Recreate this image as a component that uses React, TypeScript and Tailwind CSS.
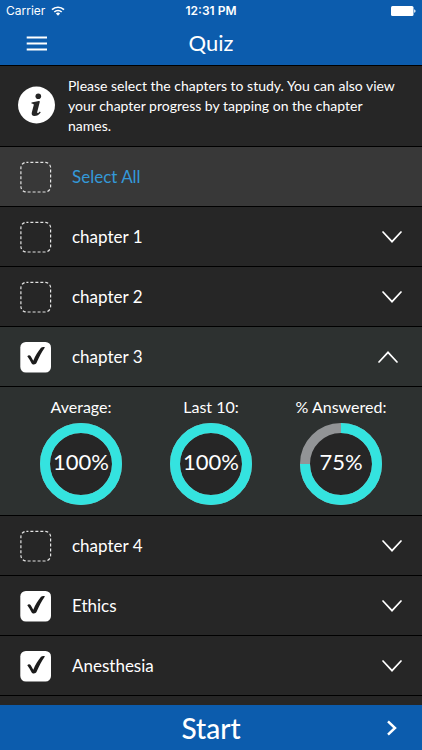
import { useState } from 'react';

interface Chapter {
  id: string;
  name: string;
  stats: Stat[];
}

interface Stat {
  label: string;
  value: number;
}

const chapters: Chapter[] = [
  { id: 'c1', name: 'chapter 1', stats: [] },
  { id: 'c2', name: 'chapter 2', stats: [] },
  {
    id: 'c3',
    name: 'chapter 3',
    stats: [
      { label: 'Average:', value: 100 },
      { label: 'Last 10:', value: 100 },
      { label: '% Answered:', value: 75 },
    ],
  },
  { id: 'c4', name: 'chapter 4', stats: [] },
  { id: 'ethics', name: 'Ethics', stats: [] },
  { id: 'anesthesia', name: 'Anesthesia', stats: [] },
];

function StatusBar() {
  return (
    <div className="grid h-[22px] grid-cols-3 items-center px-1.5 font-['Inter',sans-serif] text-xs">
      <div className="flex items-center gap-1.5">
        <span>Carrier</span>
        <svg width="14" height="10" viewBox="0 0 14 10" fill="none" stroke="currentColor" strokeWidth="1.7">
          <path d="M1 3.7a8.6 8.6 0 0 1 12 0" />
          <path d="M3.3 6a5.3 5.3 0 0 1 7.4 0" />
          <path d="M7 9.8 4.9 7.6a3 3 0 0 1 4.2 0z" fill="currentColor" stroke="none" />
        </svg>
      </div>
      <span className="text-center font-semibold">12:31 PM</span>
      <svg className="justify-self-end" width="25" height="10" viewBox="0 0 25 10" fill="currentColor">
        <rect width="22.5" height="10" rx="1.5" />
        <path d="M23.2 3.2c1.8.4 1.8 3.2 0 3.6z" />
      </svg>
    </div>
  );
}

interface TickBoxProps {
  id: string;
  checked: boolean;
  onChange: () => void;
}

function TickBox({ id, checked, onChange }: TickBoxProps) {
  return (
    <span className="relative size-8 shrink-0">
      <input
        id={id}
        type="checkbox"
        checked={checked}
        onChange={onChange}
        className="block size-8 cursor-pointer appearance-none"
      />
      <svg className="pointer-events-none absolute inset-0" width="32" height="32" viewBox="0 0 32 32">
        {checked ? (
          <>
            <rect x="0.3" y="0.9" width="30.7" height="30.7" rx="5.5" fill="#fff" />
            <path
              d="M7.300 15.200c1.100-1.300 2.700-1.200 3.600.3l2.400 4.200C15.300 14.800 17.900 10.500 21 6.800c1.200-1 3.100-1.100 3.900-.4-3.300 4.500-5.900 9.700-8.300 15.400-.9 1.900-4.100 2.300-5.200.1-1.200-2.300-2.500-4.500-4.100-6.700z"
              fill="#1c1c1c"
            />
          </>
        ) : (
          <rect
            x="0.9"
            y="1.3"
            width="29.7"
            height="29.7"
            rx="5.5"
            fill="none"
            stroke="#e4e4e4"
            strokeWidth="1.2"
            strokeDasharray="3 1.980"
            strokeDashoffset="1"
          />
        )}
      </svg>
    </span>
  );
}

function Ring({ label, value }: Stat) {
  return (
    <div className="flex flex-col items-center">
      <span className="text-base leading-5">{label}</span>
      <div className="relative mt-1.5 grid size-[82px] place-items-center pb-1">
        <svg className="absolute inset-0" width="82" height="82" viewBox="0 0 82 82">
          <circle cx="41" cy="41" r="36" fill="#262626" stroke="#929496" strokeWidth="10" />
          <circle
            cx="41"
            cy="41"
            r="36"
            fill="none"
            stroke="#34e3df"
            strokeWidth="10"
            pathLength="100"
            strokeDasharray={`${value} ${100 - value}`}
            transform="rotate(-90 41 41)"
          />
        </svg>
        <span className="relative text-[22px] leading-6">{value}%</span>
      </div>
    </div>
  );
}

export default function App() {
  const [selected, setSelected] = useState<string[]>(['c3', 'ethics', 'anesthesia']);
  const [openId, setOpenId] = useState<string | null>('c3');

  const allSelected = selected.length === chapters.length;

  const toggle = (id: string) => {
    setSelected((prev) => (prev.includes(id) ? prev.filter((s) => s !== id) : [...prev, id]));
  };

  const toggleAll = () => {
    setSelected(allSelected ? [] : chapters.map((c) => c.id));
  };

  return (
    <div className="flex h-screen flex-col bg-[#262626] font-['Lato',sans-serif] text-white">
      {/* Header */}
      <header className="shrink-0 border-b border-black bg-[#0c5cad]">
        <StatusBar />
        <div className="grid h-[43px] grid-cols-[1fr_auto_1fr] items-center px-6">
          <button type="button" aria-label="Menu" className="w-fit">
            <svg width="26" height="16" viewBox="0 0 26 16" stroke="currentColor" strokeWidth="2.200">
              <path d="M2.700 1.500h20.300M2.700 7.500h20.300M2.700 13.500h20.300" />
            </svg>
          </button>
          <h1 className="pb-0.5 text-[22px] leading-7">Quiz</h1>
        </div>
      </header>

      {/* Chapter list */}
      <main className="min-h-0 flex-1 overflow-hidden">
        <section className="flex items-center gap-3 border-b border-black py-2.5 pr-5 pl-4">
          <svg className="mb-0.5 shrink-0" width="40" height="40" viewBox="0 0 40 40">
            <circle cx="20.500" cy="20" r="18.500" fill="#fff" />
            <g fill="#262626">
              <circle cx="22.300" cy="11.300" r="2.800" />
              <path d="M15.500 17.400c2.500-.4 4.800-.9 7.300-1.300.8-.1 1.100.3.900 1.100l-2.500 9.800c-.2 1 .3 1.300 1 .9.600-.3 1.100-.8 1.700-1.300l.8.800c-1.700 2.200-3.800 3.600-6.300 3.600-2.200 0-3.100-1.500-2.600-3.500l1.900-7.300c.2-.9-.1-1.400-1-1.500l-1.200-.1z" />
            </g>
          </svg>
          <p className="text-sm leading-5">
            Please select the chapters to study. You can also view your chapter progress by tapping on the chapter
            names.
          </p>
        </section>

        <div className="flex h-[60px] items-center gap-5 border-b border-black bg-[#383838] px-5">
          <TickBox id="all" checked={allSelected} onChange={toggleAll} />
          <label htmlFor="all" className="text-[17px] leading-6 text-[#3498d8]">
            Select All
          </label>
        </div>

        <ul>
          {chapters.map((chapter) => {
            const open = openId === chapter.id;
            return (
              <li key={chapter.id} className={open ? 'bg-[#2d3130]' : 'border-b border-black last:border-b'}>
                <div
                  className={
                    open
                      ? 'flex h-[60px] items-center gap-5 border-b border-black px-5'
                      : 'flex h-[59px] items-center gap-5 px-5'
                  }
                >
                  <TickBox
                    id={chapter.id}
                    checked={selected.includes(chapter.id)}
                    onChange={() => toggle(chapter.id)}
                  />
                  <label htmlFor={chapter.id} className="flex-1 text-[17px] leading-6">
                    {chapter.name}
                  </label>
                  <button
                    type="button"
                    aria-label={`Progress for ${chapter.name}`}
                    aria-expanded={open}
                    onClick={() => setOpenId(open ? null : chapter.id)}
                    className={open ? 'pr-1' : ''}
                  >
                    <svg
                      width="20"
                      height="12"
                      viewBox="0 0 20 12"
                      fill="none"
                      stroke="currentColor"
                      strokeWidth="1.700"
                      strokeLinecap="round"
                    >
                      <path d={open ? 'M1 11 10 1.300 19 11' : 'M1 1 10 10.700 19 1'} />
                    </svg>
                  </button>
                </div>
                {open && chapter.stats.length > 0 && (
                  <div className="grid h-[129px] grid-cols-3 border-b border-black px-4 pt-2.5">
                    {chapter.stats.map((stat) => (
                      <Ring key={stat.label} {...stat} />
                    ))}
                  </div>
                )}
              </li>
            );
          })}
        </ul>
      </main>

      {/* Start bar */}
      <footer className="shrink-0 bg-[#0c5cad]">
        <button type="button" className="grid h-[45px] w-full grid-cols-[1fr_auto_1fr] items-center px-6">
          <span className="col-start-2 text-[28px] leading-9 font-medium">Start</span>
          <svg
            className="justify-self-end"
            width="12"
            height="16"
            viewBox="0 0 12 16"
            fill="none"
            stroke="currentColor"
            strokeWidth="2.500"
          >
            <path d="M2 1.300 9 8l-7 6.700" />
          </svg>
        </button>
      </footer>
    </div>
  );
}
